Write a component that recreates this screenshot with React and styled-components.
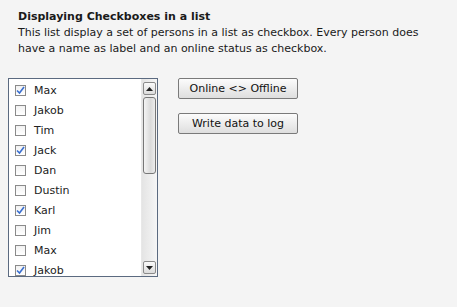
import styled, { createGlobalStyle } from "styled-components";

const GlobalStyle = createGlobalStyle`
    html, body {
        margin: 0;
        padding: 0;
        background: #f4f4f4;
    }
    body {
        font-family: "DejaVu Sans", Verdana, sans-serif;
        color: #111;
    }
`

const people = [
    { name: "Max", online: true },
    { name: "Jakob", online: false },
    { name: "Tim", online: false },
    { name: "Jack", online: true },
    { name: "Dan", online: false },
    { name: "Dustin", online: false },
    { name: "Karl", online: true },
    { name: "Jim", online: false },
    { name: "Max", online: false },
    { name: "Jakob", online: true },
]

export default function App() {
    return (
        <Page>
            <GlobalStyle />
            <Intro>
                <h2>Displaying Checkboxes in a list</h2>
                <p>This list display a set of persons in a list as checkbox. Every person does<br />have a name as label and an online status as checkbox.</p>
            </Intro>

            <Content>
                <ListBox>
                    <Rows>
                        {people.map((p, i) => (
                            <Row key={i}>
                                <Box checked={p.online}>
                                    {p.online && (
                                        <svg width="9" height="9" viewBox="0 0 9 9">
                                            <path d="M1 4.5 L3.5 7 L8 1" fill="none" stroke="#3a6fd0" strokeWidth="1.6" />
                                        </svg>
                                    )}
                                </Box>
                                <span>{p.name}</span>
                            </Row>
                        ))}
                    </Rows>
                    <ScrollBar>
                        <ArrowButton>
                            <svg width="7" height="4" viewBox="0 0 7 4"><path d="M0 4 L3.5 0 L7 4 Z" fill="#222" /></svg>
                        </ArrowButton>
                        <Track>
                            <Thumb />
                        </Track>
                        <ArrowButton>
                            <svg width="7" height="4" viewBox="0 0 7 4"><path d="M0 0 L3.5 4 L7 0 Z" fill="#222" /></svg>
                        </ArrowButton>
                    </ScrollBar>
                </ListBox>

                <Actions>
                    <Button>Online &lt;&gt; Offline</Button>
                    <Button>Write data to log</Button>
                </Actions>
            </Content>
        </Page>
    )
}

const Page = styled.div`
    width: 457px;
    height: 307px;
    padding: 9px 8px 0 8px;
    box-sizing: border-box;
`

const Intro = styled.div`
    padding-left: 10px;
    font-size: 11px;
    line-height: 16px;
    color: #1a1a1a;

    h2 {
        margin: 0;
        font-size: 11px;
        font-weight: bold;
        line-height: 16px;
    }

    p {
        margin: 0;
    }
`

const Content = styled.div`
    display: flex;
    align-items: flex-start;
    gap: 20px;
    margin-top: 21px;
`

const ListBox = styled.div`
    width: 150px;
    height: 199px;
    box-sizing: border-box;
    border: 1px solid #5b6a80;
    background: #fff;
    display: flex;
`

const Rows = styled.div`
    flex: 1;
    padding-top: 1px;
    overflow: hidden;
`

const Row = styled.div`
    height: 20px;
    display: flex;
    align-items: center;
    padding-left: 6px;
    font-size: 11px;
    color: #222;

    span {
        margin-left: 8px;
    }
`

const Box = styled.div`
    width: 9px;
    height: 9px;
    border: 1px solid #8a8a8a;
    background: linear-gradient(#f2f2f2, #ffffff);
    display: flex;
    align-items: center;
    justify-content: center;
`

const ScrollBar = styled.div`
    width: 15px;
    display: flex;
    flex-direction: column;
    background: linear-gradient(to right, #e4e4e4, #f6f6f6);
    border-left: 1px solid #e8e8e8;
`

const ArrowButton = styled.div`
    height: 13px;
    margin: 3px 1px 0 1px;
    border: 1px solid #8a8a8a;
    border-radius: 2px;
    background: linear-gradient(#fafafa, #dcdcdc);
    display: flex;
    align-items: center;
    justify-content: center;
    box-sizing: border-box;

    &:last-child {
        margin: 0 1px 2px 1px;
    }
`

const Track = styled.div`
    flex: 1;
    padding: 2px 1px;
`

const Thumb = styled.div`
    height: 77px;
    border: 1px solid #777;
    border-radius: 3px;
    background: linear-gradient(to right, #f4f4f4, #dadada 60%, #ececec);
    box-sizing: border-box;
`

const Actions = styled.div`
    display: flex;
    flex-direction: column;
    gap: 14px;
`

const Button = styled.button`
    width: 120px;
    height: 21px;
    padding: 0;
    border: 1px solid #7a7a7a;
    border-radius: 2px;
    background: linear-gradient(#fcfcfc, #dedede);
    font-family: "DejaVu Sans", Verdana, sans-serif;
    font-size: 11px;
    color: #111;
`
